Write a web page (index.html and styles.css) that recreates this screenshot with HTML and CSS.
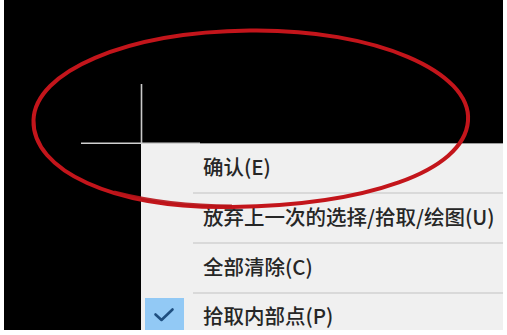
FILE: index.html
```html
<!DOCTYPE html>
<html lang="zh">
<head>
<meta charset="utf-8">
<title>Context menu</title>
<link rel="stylesheet" href="styles.css">
</head>
<body>
<div class="stage">
  <div class="menu">
    <div class="item">
      <div class="gutter"></div>
      <div class="label">确认(E)</div>
    </div>
    <div class="item">
      <div class="gutter"></div>
      <div class="label">放弃上一次的选择/拾取/绘图(U)</div>
    </div>
    <div class="item">
      <div class="gutter"></div>
      <div class="label">全部清除(C)</div>
    </div>
    <div class="item">
      <div class="gutter">
        <div class="check">
          <svg width="39" height="34" viewBox="0 0 39 34"><path d="M10.5 16.5 L16.5 22 L27.5 11.5" fill="none" stroke="#1f4f80" stroke-width="2.6" stroke-linecap="round" stroke-linejoin="round"/></svg>
        </div>
      </div>
      <div class="label">拾取内部点(P)</div>
    </div>
  </div>
  <svg class="overlay" width="499" height="330" viewBox="0 0 499 330">
    <line x1="137.5" y1="84" x2="137.5" y2="143" stroke="#c9c9c9" stroke-width="1.6"/>
    <line x1="77" y1="143.2" x2="196" y2="143.2" stroke="#d0d0d0" stroke-width="1.6"/>
    <path d="M246 30.5 C 372 29, 468 72, 464 121 C 460 172, 362 205, 228 207 C 108 209, 28 170, 29.5 120 C 31 72, 120 32, 246 30.5 Z" fill="none" stroke="#c3151b" stroke-width="4"/>
    <path d="M110 192 C 145 201, 188 206, 228 206" fill="none" stroke="#b8141a" stroke-width="3" opacity="0.9"/>
  </svg>
</div>
</body>
</html>
```

FILE: styles.css
```css
html, body {
  margin: 0;
  padding: 0;
  background: #ffffff;
}

.stage {
  position: relative;
  width: 499px;
  height: 330px;
  margin: 0 4px;
  background: #000000;
  overflow: hidden;
}

.menu {
  position: absolute;
  left: 137px;
  top: 143px;
  right: 0;
  bottom: 0;
  background: #f0f0f0;
  border-top: 1px solid #9c9c9c;
  font-family: "Noto Sans CJK SC", "Noto Sans", sans-serif;
  font-size: 20.5px;
  font-weight: 500;
  color: #262626;
  display: flex;
  flex-direction: column;
}

.item {
  display: flex;
  height: 50px;
  flex-shrink: 0;
}

.gutter {
  width: 52px;
  flex-shrink: 0;
}

.label {
  flex: 1;
  display: flex;
  align-items: center;
  padding-left: 10px;
  padding-bottom: 4px;
  border-bottom: 2px solid #d9d9d9;
  white-space: nowrap;
}

.item:last-child .label {
  border-bottom: none;
  padding-bottom: 8px;
}

.check {
  margin: 4px 0 0 4px;
  width: 39px;
  height: 40px;
  background: #92c9f5;
}

.check svg {
  display: block;
}

.overlay {
  position: absolute;
  left: 0;
  top: 0;
  pointer-events: none;
}
```
